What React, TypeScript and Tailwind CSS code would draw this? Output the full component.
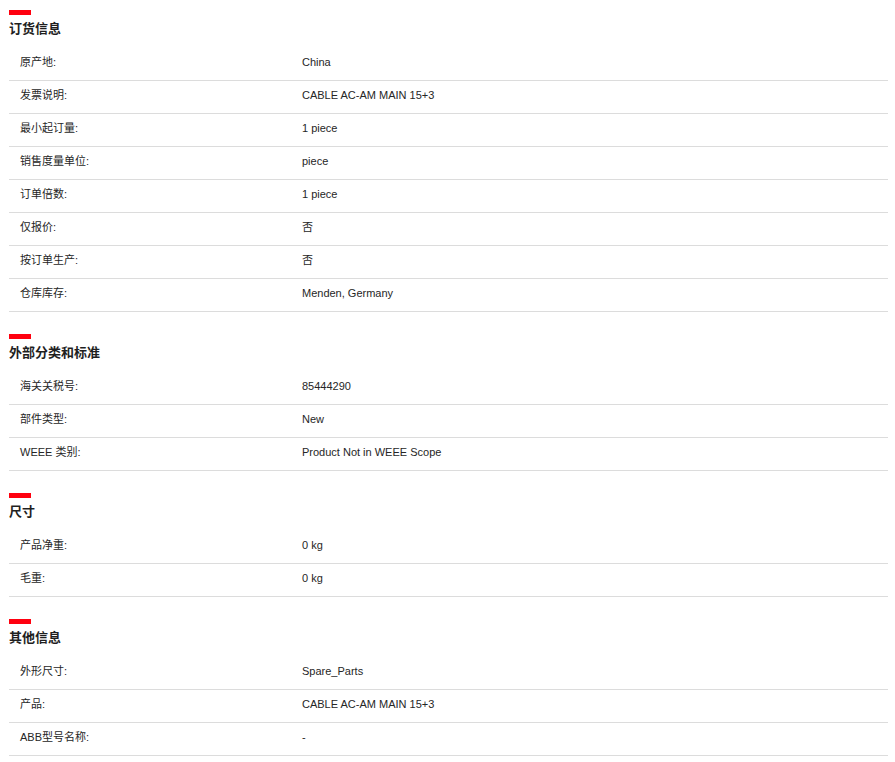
import React from 'react';

type Row = { label: string; value: string };
type Section = { title: string; rows: Row[] };

const sections: Section[] = [
  {
    title: '订货信息',
    rows: [
      { label: '原产地:', value: 'China' },
      { label: '发票说明:', value: 'CABLE AC-AM MAIN 15+3' },
      { label: '最小起订量:', value: '1 piece' },
      { label: '销售度量单位:', value: 'piece' },
      { label: '订单倍数:', value: '1 piece' },
      { label: '仅报价:', value: '否' },
      { label: '按订单生产:', value: '否' },
      { label: '仓库库存:', value: 'Menden, Germany' },
    ],
  },
  {
    title: '外部分类和标准',
    rows: [
      { label: '海关关税号:', value: '85444290' },
      { label: '部件类型:', value: 'New' },
      { label: 'WEEE 类别:', value: 'Product Not in WEEE Scope' },
    ],
  },
  {
    title: '尺寸',
    rows: [
      { label: '产品净重:', value: '0 kg' },
      { label: '毛重:', value: '0 kg' },
    ],
  },
  {
    title: '其他信息',
    rows: [
      { label: '外形尺寸:', value: 'Spare_Parts' },
      { label: '产品:', value: 'CABLE AC-AM MAIN 15+3' },
      { label: 'ABB型号名称:', value: '-' },
    ],
  },
];

const SpecSection: React.FC<{ section: Section }> = ({ section }) => (
  <section className="mt-[22px] first:mt-[10px]">
    <div className="w-[22px] h-[5px] bg-[#ff000f]" />
    <h2 className="mt-[3px] text-[13px] leading-[21px] font-bold text-[#1f1f1f]">{section.title}</h2>
    <div className="mt-[9px]">
      {section.rows.map((row) => (
        <div key={row.label} className="flex h-[33px] items-center pb-[3px] border-b border-[#dcdcdc] text-[11px] text-[#262626]">
          <div className="w-1/3 pl-[11px]">{row.label}</div>
          <div className="flex-1">{row.value}</div>
        </div>
      ))}
    </div>
  </section>
);

export default function App() {
  return (
    <div className="min-h-screen bg-white pl-[9px] pr-[7px] font-['Liberation_Sans','Noto_Sans_CJK_SC',sans-serif]">
      {sections.map((s) => (
        <SpecSection key={s.title} section={s} />
      ))}
    </div>
  );
}
